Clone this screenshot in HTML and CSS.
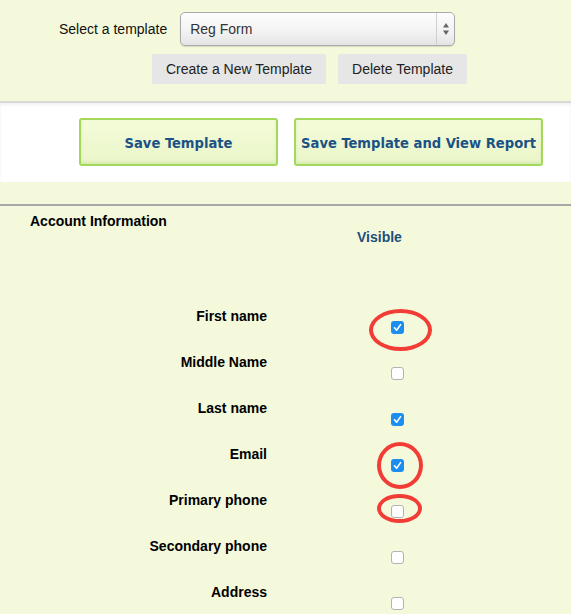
FILE: index.html
```html
<!DOCTYPE html>
<html>
<head>
<meta charset="utf-8">
<link rel="stylesheet" href="styles.css">
</head>
<body>
<div class="top">
  <div class="select-row">
    <span class="select-label">Select a template</span>
    <div class="select">
      <span class="select-value">Reg Form</span>
      <span class="select-arrow">
        <svg width="8" height="14" viewBox="0 0 8 14"><path d="M4 1 L7 5.5 H1 Z" fill="#666"/><path d="M4 13 L7 8.5 H1 Z" fill="#666"/></svg>
      </span>
    </div>
  </div>
  <div class="btn-row">
    <button class="gbtn">Create a New Template</button>
    <button class="gbtn">Delete Template</button>
  </div>
</div>
<div class="actions">
  <button class="sbtn sbtn-1">Save Template</button>
  <button class="sbtn sbtn-2">Save Template and View Report</button>
</div>
<div class="spacer"></div>
<div class="section">
  <div class="section-title">Account Information</div>
  <div class="visible-head">Visible</div>
  <div class="rows">
    <div class="row"><div class="lbl">First name</div><div class="cell"><span class="cb on"><svg viewBox="0 0 13 13"><path d="M3.5 6.8 L5.6 9.2 L9.6 3.6" fill="none" stroke="#fff" stroke-width="1.6" stroke-linecap="round" stroke-linejoin="round"/></svg></span><span class="ring ring-1"></span></div></div>
    <div class="row"><div class="lbl">Middle Name</div><div class="cell"><span class="cb"></span></div></div>
    <div class="row"><div class="lbl">Last name</div><div class="cell"><span class="cb on"><svg viewBox="0 0 13 13"><path d="M3.5 6.8 L5.6 9.2 L9.6 3.6" fill="none" stroke="#fff" stroke-width="1.6" stroke-linecap="round" stroke-linejoin="round"/></svg></span></div></div>
    <div class="row"><div class="lbl">Email</div><div class="cell"><span class="cb on"><svg viewBox="0 0 13 13"><path d="M3.5 6.8 L5.6 9.2 L9.6 3.6" fill="none" stroke="#fff" stroke-width="1.6" stroke-linecap="round" stroke-linejoin="round"/></svg></span><span class="ring ring-2"></span></div></div>
    <div class="row"><div class="lbl">Primary phone</div><div class="cell"><span class="cb"></span><span class="ring ring-3"></span></div></div>
    <div class="row"><div class="lbl">Secondary phone</div><div class="cell"><span class="cb"></span></div></div>
    <div class="row"><div class="lbl">Address</div><div class="cell"><span class="cb"></span></div></div>
  </div>
</div>
</body>
</html>
```
FILE: styles.css
```css
html, body {
  margin: 0;
  padding: 0;
}
body {
  background: #f4f9dc;
  font-family: "Liberation Sans", Arial, sans-serif;
  font-size: 14px;
  color: #000;
  overflow: hidden;
}
.top {
  height: 103px;
  box-sizing: border-box;
  padding-top: 12px;
  border-bottom: 2px solid #d8d8d8;
  background: #f4f9dc;
}
.select-row {
  display: flex;
  align-items: center;
  padding-left: 59px;
  gap: 13px;
}
.select-label {
  font-size: 14px;
  color: #111;
}
.select {
  width: 275px;
  height: 34px;
  box-sizing: border-box;
  border: 1px solid #a9a9a9;
  border-radius: 5px;
  background: linear-gradient(#fdfdfd, #f2f2f2 60%, #e4e4e4);
  box-shadow: 0 1px 1px rgba(0,0,0,0.12);
  display: flex;
  align-items: center;
}
.select-value {
  flex: 1;
  padding-left: 9px;
  font-size: 14px;
  color: #333;
}
.select-arrow {
  width: 17px;
  height: 100%;
  border-left: 1px solid #cfcfcf;
  display: flex;
  align-items: center;
  justify-content: center;
}
.btn-row {
  display: flex;
  gap: 12px;
  padding-left: 152px;
  margin-top: 8px;
}
.gbtn {
  height: 30px;
  border: none;
  border-radius: 2px;
  background: #e6e6e6;
  font-family: "Liberation Sans", Arial, sans-serif;
  font-size: 14px;
  color: #222;
  padding: 0 14px;
}
.actions {
  background: #fff;
  height: 79px;
  box-sizing: border-box;
  padding-top: 15px;
  padding-left: 79px;
  display: flex;
  align-items: flex-start;
  gap: 16px;
  box-shadow: inset 0 2px 3px rgba(0,0,0,0.06);
}
.sbtn {
  height: 48px;
  border: 2px solid #a4d85c;
  border-radius: 3px;
  background: linear-gradient(#f4fbd9, #eaf6c9);
  box-shadow: inset 0 -2px 3px rgba(160,200,90,0.25);
  font-family: "DejaVu Sans Condensed", "DejaVu Sans", Verdana, sans-serif;
  font-stretch: condensed;
  font-weight: bold;
  font-size: 14.6px;
  color: #1b5286;
  padding: 0;
  white-space: nowrap;
}
.sbtn-1 { width: 199px; }
.sbtn-2 { width: 249px; }
.spacer {
  height: 22px;
}
.section {
  border-top: 2px solid #a8a8a8;
  padding-top: 7px;
}
.section-title {
  padding-left: 30px;
  font-weight: bold;
  line-height: 16px;
}
.visible-head {
  padding-left: 357px;
  font-weight: bold;
  color: #1d4f7c;
  line-height: 16px;
}
.rows {
  margin-top: 63px;
}
.row {
  display: grid;
  grid-template-columns: 267px 1fr;
  height: 46px;
}
.lbl {
  text-align: right;
  font-weight: bold;
  line-height: 16px;
}
.cell {
  position: relative;
  padding-left: 124px;
  padding-top: 13px;
}
.cb {
  display: block;
  width: 13px;
  height: 13px;
  box-sizing: border-box;
  border: 1px solid #b3b3b3;
  border-radius: 3px;
  background: #fff;
}
.cb.on {
  border: none;
  background: #1b8ef2;
}
.cb svg {
  display: block;
  width: 13px;
  height: 13px;
}
.ring {
  position: absolute;
  box-sizing: border-box;
  border: 4px solid #f23d37;
  border-radius: 50%;
}
.ring-1 {
  left: 102px;
  top: 1px;
  width: 63px;
  height: 42px;
}
.ring-2 {
  left: 110px;
  top: -4px;
  width: 46px;
  height: 47px;
}
.ring-3 {
  left: 110px;
  top: 2px;
  width: 45px;
  height: 29px;
}
```
